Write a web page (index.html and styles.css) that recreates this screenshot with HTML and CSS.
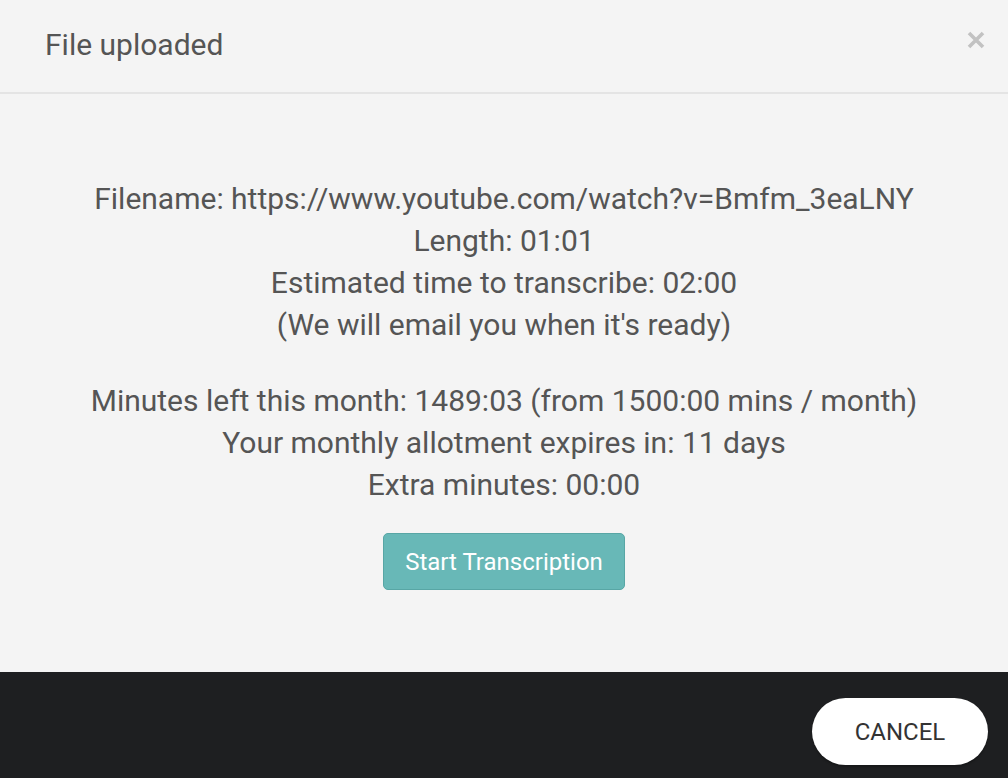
FILE: index.html
```html
<!DOCTYPE html>
<html>
<head>
<meta charset="utf-8">
<link rel="stylesheet" href="styles.css">
</head>
<body>
<div class="modal">
  <header class="modal-header">
    <h1 class="title">File uploaded</h1>
    <button class="close" aria-label="Close">
      <svg width="18" height="18" viewBox="0 0 18 18"><path d="M2 2L16 16M16 2L2 16" stroke="#c2c2c2" stroke-width="3.6" stroke-linecap="butt"/></svg>
    </button>
  </header>
  <main class="modal-body">
    <div class="info">
      <p>Filename: https://www.youtube.com/watch?v=Bmfm_3eaLNY</p>
      <p>Length: 01:01</p>
      <p>Estimated time to transcribe: 02:00</p>
      <p>(We will email you when it's ready)</p>
    </div>
    <div class="info second">
      <p>Minutes left this month: 1489:03 (from 1500:00 mins / month)</p>
      <p>Your monthly allotment expires in: 11 days</p>
      <p>Extra minutes: 00:00</p>
    </div>
    <button class="start">Start Transcription</button>
  </main>
  <footer class="modal-footer">
    <button class="cancel">CANCEL</button>
  </footer>
</div>
</body>
</html>
```
FILE: styles.css
```css
* { box-sizing: border-box; }
html, body { margin: 0; padding: 0; }
body {
  width: 1008px;
  height: 778px;
  background: #f4f4f4;
  font-family: Roboto, "Liberation Sans", sans-serif;
  color: #555555;
  overflow: hidden;
}
.modal {
  display: flex;
  flex-direction: column;
  height: 778px;
}
.modal-header {
  height: 94px;
  border-bottom: 2px solid #e4e4e4;
  display: flex;
  align-items: flex-start;
  justify-content: space-between;
  padding: 26px 23px 0 45px;
}
.title {
  margin: 0;
  font-size: 30px;
  font-weight: 400;
  line-height: 38px;
  color: #555555;
}
.close {
  background: none;
  border: 0;
  padding: 0;
  margin-top: 5px;
  width: 18px;
  height: 18px;
  display: flex;
}
.modal-body {
  flex: 1;
  display: flex;
  flex-direction: column;
  align-items: center;
  padding-top: 84px;
}
.info { text-align: center; }
.info p {
  margin: 0;
  font-size: 30px;
  line-height: 42px;
}
.info.second { margin-top: 34px; }
.start {
  margin-top: 27px;
  width: 242px;
  height: 57px;
  background: #68b8b7;
  border: 1px solid #58a6a5;
  border-radius: 5px;
  color: #ffffff;
  font-family: Roboto, "Liberation Sans", sans-serif;
  font-size: 24px;
  padding: 0;
}
.modal-footer {
  height: 106px;
  background: #1e1f21;
  display: flex;
  justify-content: flex-end;
  align-items: flex-start;
  padding: 26px 20px 0 0;
}
.cancel {
  width: 176px;
  height: 67px;
  border-radius: 34px;
  background: #ffffff;
  border: 0;
  box-shadow: 0 2px 2px rgba(0,0,0,0.25);
  font-family: Roboto, "Liberation Sans", sans-serif;
  font-size: 24px;
  color: #333333;
  padding: 0;
}
```
